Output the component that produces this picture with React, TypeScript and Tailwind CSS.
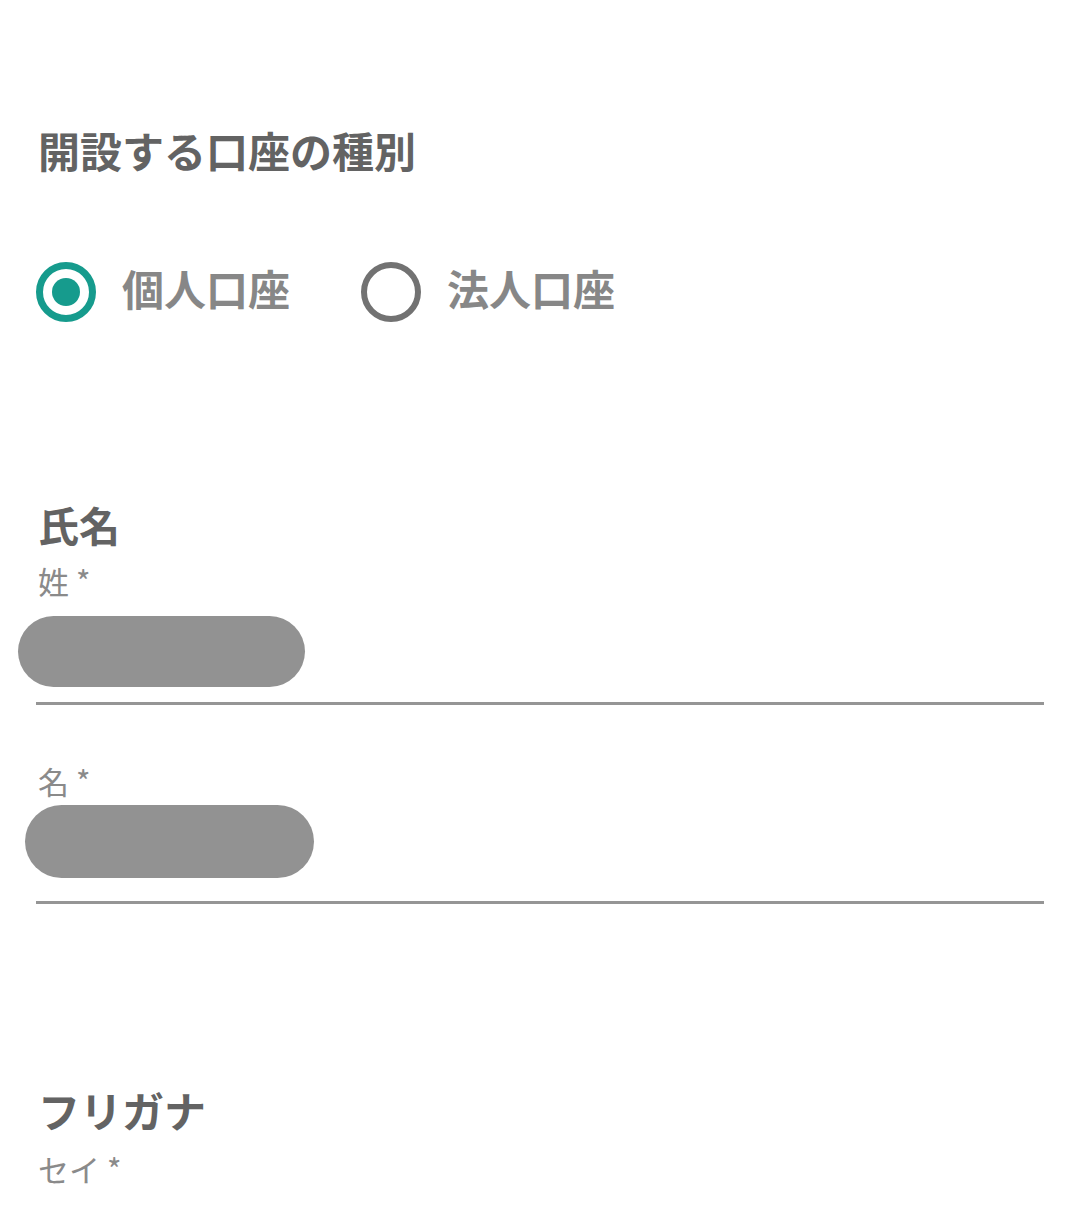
import React from "react";

const font = { fontFamily: '"Noto Sans CJK JP", "Noto Sans", sans-serif' };

function Radio({ label, checked }: { label: string; checked?: boolean }) {
  return (
    <label className="flex items-center gap-[26px]">
      {checked ? (
        <span className="flex h-[60px] w-[60px] items-center justify-center rounded-full border-[7px] border-[#169b8d]">
          <span className="h-[28px] w-[28px] rounded-full bg-[#169b8d]" />
        </span>
      ) : (
        <span className="h-[60px] w-[60px] rounded-full border-[6px] border-[#727272]" />
      )}
      <span className="pb-[8px] text-[42px] font-bold leading-none text-[#878787]">{label}</span>
    </label>
  );
}

function Field({ label, blobClass }: { label: string; blobClass: string }) {
  return (
    <div className="flex flex-col">
      <div className="text-[31px] leading-none text-[#8a8a8a]">{label} *</div>
      <div className={blobClass} />
      <div className="-ml-[2px] h-[3px] bg-[#959595]" />
    </div>
  );
}

export default function App() {
  return (
    <div className="min-h-[1217px] w-[1080px] bg-white pl-[38px] pr-[36px]" style={font}>
      <h2 className="pt-[129px] text-[42px] font-bold leading-none text-[#636363]">開設する口座の種別</h2>
      <div className="-ml-[2px] mt-[91px] flex items-center gap-[71px]">
        <Radio label="個人口座" checked />
        <Radio label="法人口座" />
      </div>

      <h3 className="mt-[182px] text-[41px] font-bold leading-none text-[#636363]">氏名</h3>
      <div className="mt-[20px]">
        <Field label="姓" blobClass="-ml-[20px] mt-[20px] mb-[15px] h-[71px] w-[287px] rounded-full bg-[#929292]" />
      </div>
      <div className="mt-[60px]">
        <Field label="名" blobClass="-ml-[13px] mt-[9px] mb-[23px] h-[73px] w-[289px] rounded-full bg-[#929292]" />
      </div>

      <h3 className="mt-[185px] text-[42px] font-bold leading-none text-[#636363]">フリガナ</h3>
      <div className="mt-[22px] text-[31px] leading-none text-[#8a8a8a]">セイ *</div>
    </div>
  );
}
